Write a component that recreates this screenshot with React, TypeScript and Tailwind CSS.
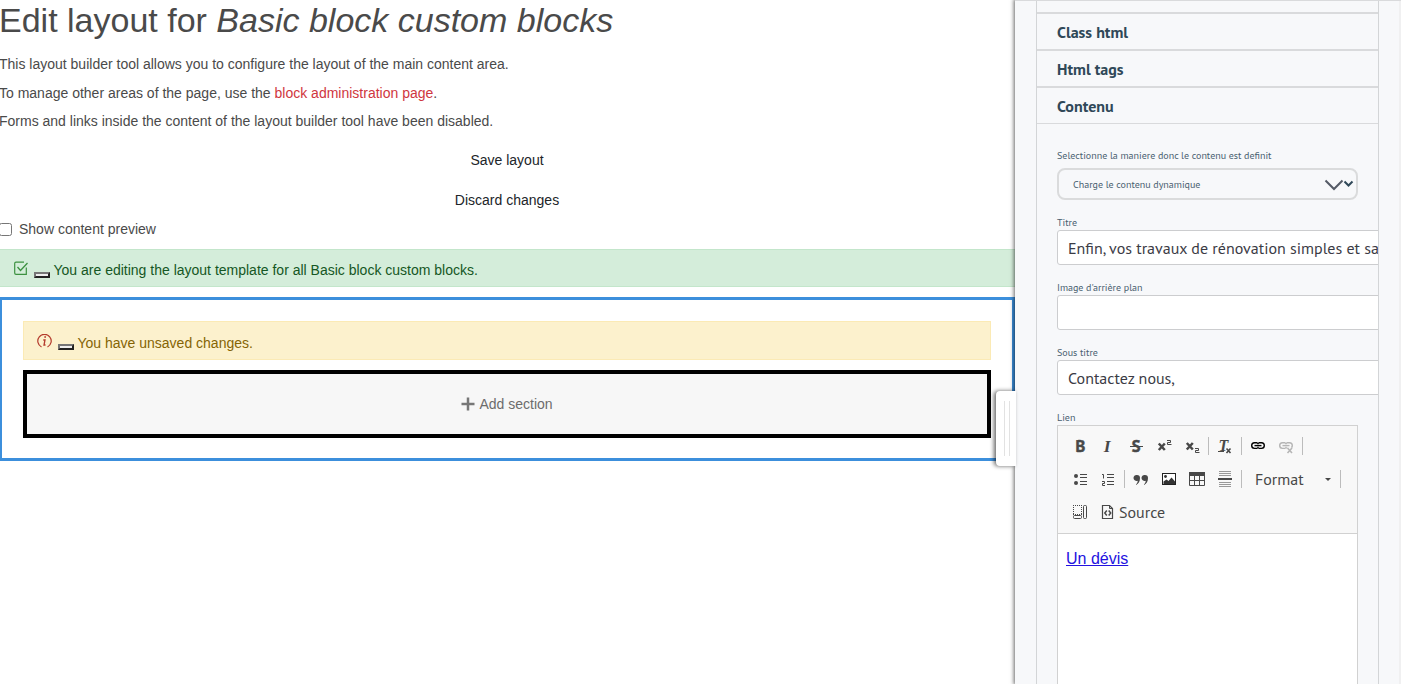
import type { ReactNode } from 'react';

const Glyph = ({ children }: { children: ReactNode }) => (
  <span className="flex h-[33px] w-7 shrink-0 items-start justify-center pt-2">
    <svg width="16" height="16" viewBox="0 0 16 16" fill="none" stroke="#484848" overflow="visible">
      {children}
    </svg>
  </span>
);

const Separator = () => (
  <span className="flex h-[33px] w-[5px] shrink-0 items-start pt-[7px] pl-[2px]">
    <span className="h-[18px] w-px bg-[#bcbcbc]" />
  </span>
);

const letter = { fill: '#484848', stroke: 'none' };

const TwoMark = ({ x, y }: { x: number; y: number }) => (
  <path d={`M${x} ${y + 0.5}h3.5v2h-3v2h4`} strokeWidth="1" />
);

const Bold = () => (
  <Glyph>
    <text x="3.500" y="14" fontSize="16.500" fontWeight="700" fontFamily="PT Sans" fill="#484848" stroke="#484848" strokeWidth="0.5">B</text>
  </Glyph>
);

const Italic = () => (
  <Glyph>
    <text x="3.800" y="13.800" fontSize="17.500" fontWeight="700" fontStyle="italic" fontFamily="Liberation Serif" {...letter}>I</text>
  </Glyph>
);

const Strike = () => (
  <Glyph>
    <text x="3.800" y="14" fontSize="16.500" fontWeight="700" fontFamily="PT Sans" fill="#484848" stroke="#484848" strokeWidth="0.4">S</text>
    <path d="M2 8.500h13" />
  </Glyph>
);

const Super = () => (
  <Glyph>
    <path d="M2.800 5.500l6 6.500M8.800 5.500l-6 6.500" strokeWidth="2.500" />
    <TwoMark x={11} y={2} />
  </Glyph>
);

const Sub = () => (
  <Glyph>
    <path d="M2.800 5l6 6.500M8.800 5l-6 6.500" strokeWidth="2.500" />
    <TwoMark x={11} y={10} />
  </Glyph>
);

const ClearFormat = () => (
  <Glyph>
    <text x="1.600" y="12.500" fontSize="16" fontWeight="700" fontStyle="italic" fontFamily="Liberation Serif" {...letter}>T</text>
    <path d="M1 13.500h6" />
    <path d="M9.500 10.500l4 4.500M13.500 10.500l-4 4.500" strokeWidth="1.600" />
  </Glyph>
);

const LinkShape = ({ tone }: { tone: string }) => (
  <g stroke={tone}>
    <path d="M7.500 4.800H4.500a2.800 2.800 0 0 0 0 5.600h3M8.500 4.800h3a2.800 2.800 0 0 1 0 5.600h-3" strokeWidth="1.400" />
    <path d="M6.800 4.800l1.500 1.200M9.200 4.800L7.700 6M6.800 10.400l1.500-1.200M9.200 10.400L7.700 9.200" strokeWidth="1" />
    <path d="M4.500 7.600h7" strokeWidth="1.400" />
  </g>
);

const Bullets = () => (
  <Glyph>
    <circle cx="4" cy="5" r="2" {...letter} />
    <circle cx="4" cy="12" r="2" {...letter} />
    <path d="M8 3.500h7M8 6.500h7M8 10.500h7M8 13.500h7" />
  </Glyph>
);

const Numbers = () => (
  <Glyph>
    <path d="M2 3.500h1.500v4M2 10.500h2.500v2h-2v2h2.500M7 3.500h7M7 6.500h7M7 10.500h7M7 13.500h7" />
  </Glyph>
);

const Quote = () => (
  <Glyph>
    <path
      transform="translate(0 1)"
      d="M4 3a3 3 0 0 1 3 3c0 3.500-1.500 6-4.500 7 1.500-1.600 2.300-2.800 2.200-4.300A3 3 0 1 1 4 3zM12 3a3 3 0 0 1 3 3c0 3.500-1.500 6-4.500 7 1.500-1.600 2.300-2.800 2.200-4.300A3 3 0 1 1 12 3z"
      {...letter}
    />
  </Glyph>
);

const Picture = () => (
  <Glyph>
    <rect x="1.500" y="2.500" width="13" height="11" fill="#fff" stroke="#222" />
    <path d="M2.500 13v-2.500l3-2 2 1.500 3-3.500 3.500 4V13z" fill="#333" stroke="none" />
    <circle cx="4.500" cy="5.500" r="1.400" fill="#333" stroke="none" />
  </Glyph>
);

const TableIcon = () => (
  <Glyph>
    <path d="M.5 2.500h15v12h-15zM0 9.500h16M5.500 4v11M10.500 4v11" />
    <path d="M0 3h16" strokeWidth="4" />
  </Glyph>
);

const Rule = () => (
  <Glyph>
    <path d="M2 .5h12M2 2.500h12M2 4.500h12M2 11.500h12M2 13.500h12M2 15.500h12" stroke="#999" />
    <path d="M1 8h14" strokeWidth="2" />
  </Glyph>
);

const Blocks = () => (
  <Glyph>
    <path d="M1 1.500h9M1 10.500h9" strokeDasharray="1 1" />
    <path d="M1.500 1v9M9.500 1v9" strokeDasharray="1 1" />
    <rect x="1.500" y="11.500" width="8" height="3" rx="1" />
    <rect x="11.500" y="1.500" width="3" height="13" rx="1" />
  </Glyph>
);

const PageCode = () => (
  <svg width="16" height="16" viewBox="0 0 16 16" fill="none" stroke="#484848">
    <path d="M2.500 1.500h7l3 3v10h-10z" strokeWidth="1.200" />
    <path d="M9.500 1.500v3h3" />
    <path d="M6.800 6.500l-2 2.500 2 2.500M8.700 6.500l2 2.500-2 2.500" strokeWidth="1.500" />
  </svg>
);

const Dash = () => (
  <span className="h-[6px] w-4 shrink-0 border-2 border-t-[#767676] border-l-[#767676] border-r-[#222] border-b-[#222] bg-[#efefef]" />
);

const Heading = ({ children }: { children: ReactNode }) => (
  <div className="flex h-[37px] items-center border-b-2 border-[#d9dadc] pl-5 pt-px text-base font-bold text-[#2f4858]">
    {children}
  </div>
);

const Field = ({ label, value }: { label: string; value: string }) => (
  <div className="h-[65px] pl-5">
    <div className="flex h-[15px] items-center pb-px text-[10px] text-[#496070]">{label}</div>
    <div className="flex h-[35px] w-[380px] items-center rounded-[3px] border border-[#cccdcf] bg-white pl-[10px] text-base whitespace-nowrap text-[#3b3b45]">
      {value}
    </div>
  </div>
);

const Main = () => (
  <main className="h-full w-[1015px] shrink-0 overflow-hidden bg-white text-sm text-[#4a4a4a]">
    <h1 className="-ml-px h-[50px] text-[34px] leading-[41px] whitespace-nowrap">
      Edit layout for <em>Basic block custom blocks</em>
    </h1>
    <div className="-ml-px h-[90px] leading-[28.500px]">
      <p>This layout builder tool allows you to configure the layout of the main content area.</p>
      <p>
        To manage other areas of the page, use the <a className="text-[#cf3640]">block administration page</a>.
      </p>
      <p>Forms and links inside the content of the layout builder tool have been disabled.</p>
    </div>
    <div className="-ml-px flex flex-col text-center leading-10 text-[#212529]">
      <button className="h-10">Save layout</button>
      <button className="h-10">Discard changes</button>
    </div>
    <label className="flex h-[29px] items-start gap-[7px] leading-[18px]">
      <span className="mt-[3px] -ml-px h-[13px] w-[13px] rounded-[2.500px] border border-[#767676] bg-white" />
      Show content preview
    </label>
    <div className="flex h-[38px] items-center border-y border-[#c3e6cb] bg-[#d4edda] pl-[14px] pt-[4px] text-[#155724]">
      <svg className="-mt-[4px] mr-[6px]" width="14" height="14" viewBox="0 0 14 14" fill="none" stroke="#3c9140">
        <path d="M10 1.200H2Q.7 1.200 .7 2.500V12Q.7 13.300 2 13.300H12.300V6.500" strokeWidth="1.200" />
        <path d="M3.500 6l3 3.500 7-7.500" strokeWidth="1.300" />
      </svg>
      <span className="mt-[10px] mr-1 flex"><Dash /></span>
      <span className="-ml-[0.500px] pb-px">You are editing the layout template for all Basic block custom blocks.</span>
    </div>
    <section className="mt-[10px] -ml-px h-[164px] w-[1016px] border-[3px] border-[#3c8fdc] px-[21px] pt-[21px]">
      <div className="flex h-[39px] items-center border border-[#fbeab5] bg-[#fcf1cd] pl-[13px] pt-[5px] text-[#856404]">
        <svg className="-mt-[4px] mr-[6px]" width="15" height="14" viewBox="0 0 15 14" fill="none" stroke="#b43a2c">
          <path d="M4.500 13A6.700 6.700 0 1 1 10.500 13" strokeWidth="1.200" />
          <path d="M6.300 6h1.700l-1 5h1.500" strokeWidth="1.300" />
          <path d="M7.300 3h1.700" strokeWidth="1.500" />
        </svg>
        <span className="mt-[8px] mr-1 flex"><Dash /></span>
        <span className="-ml-[0.500px] pb-px">You have unsaved changes.</span>
      </div>
      <div className="mt-[10px] flex h-[68px] items-center justify-center gap-1 border-4 border-black bg-[#f7f7f7] text-[#6c6c6c]">
        <svg width="14" height="14" viewBox="0 0 14 14" stroke="#777" strokeWidth="2.500">
          <path d="M7 .5v13M.5 7h13" />
        </svg>
        Add section
      </div>
    </section>
  </main>
);

const Toolbar = () => (
  <div className="h-[108px] border-b border-[#d1d1d1] bg-[#f8f8f8] pl-2 pt-[4px] text-[#484848]">
    <div className="flex h-[33px]">
      <Bold /><Italic /><Strike /><Super /><Sub />
      <Separator />
      <ClearFormat />
      <Separator />
      <Glyph><LinkShape tone="#000" /></Glyph>
      <Glyph>
        <LinkShape tone="#b5b5b5" />
        <path d="M9.500 10l4.500 5M14 10l-4.500 5" stroke="#f8f8f8" strokeWidth="4" />
        <path d="M9.500 10l4.500 5M14 10l-4.500 5" stroke="#b5b5b5" strokeWidth="1.600" />
      </Glyph>
      <Separator />
    </div>
    <div className="flex h-[33px] items-center">
      <Bullets /><Numbers />
      <Separator />
      <Quote /><Picture /><TableIcon /><Rule />
      <Separator />
      <span className="w-[81px] pb-[2px] pl-[11px] text-base">Format</span>
      <span className="h-0 w-0 border-x-[3px] border-t-[3px] border-x-transparent border-t-[#484848]" />
      <span className="w-[7px]" />
      <Separator />
    </div>
    <div className="flex h-[33px] items-center">
      <Blocks />
      <span className="-mt-px ml-[6px] mr-[3px]"><PageCode /></span>
      <span className="pb-[2px] text-base">Source</span>
    </div>
  </div>
);

const Sidebar = () => (
  <aside className="relative z-10 flex h-full w-[386px] shrink-0 justify-between border-t border-[#d9dadc] bg-[#f7f8fa] font-['PT_Sans','Noto_Sans',sans-serif] shadow-[0_0_4px_1px_rgba(0,0,0,0.6)]">
    <div className="ml-[21px] w-[343px] overflow-hidden border-x border-[#d3d5d7]">
      <div className="h-[13px] border-b-2 border-[#d9dadc]" />
      <Heading>Class html</Heading>
      <Heading>Html tags</Heading>
      <div className="flex h-[36px] items-center border-b border-[#d9dadc] pl-5 text-base font-bold text-[#2f4858]">
        Contenu
      </div>
      <div className="mt-[24px] flex h-[15px] items-center pb-px pl-5 text-[10px] text-[#496070]">
        Selectionne la maniere donc le contenu est definit
      </div>
      <div className="mt-[5px] mb-[15px] ml-5 flex h-8 w-[301px] items-center rounded-lg border-2 border-[#dadbdc] pl-[14px] pr-[2px] text-[10px] text-[#496070]">
        <span className="flex-1">Charge le contenu dynamique</span>
        <svg className="mt-[2px]" width="30" height="12" viewBox="0 0 30 12" fill="none">
          <path d="M1.500 1.500l8.500 8.500 8.500-8.500" stroke="#555b66" strokeWidth="2" />
          <path d="M20.500 2.500l4 4 4-4" stroke="#2f4858" strokeWidth="2" />
        </svg>
      </div>
      <Field label="Titre" value="Enfin, vos travaux de rénovation simples et sans" />
      <Field label="Image d'arrière plan" value="" />
      <Field label="Sous titre" value="Contactez nous," />
      <div className="flex h-[15px] items-center pb-px pl-5 text-[10px] text-[#496070]">Lien</div>
      <div className="ml-5 h-[300px] w-[301px] border border-[#d1d1d1] bg-white">
        <Toolbar />
        <a className="mt-[15px] ml-2 inline-block font-['Liberation_Sans',Arial,sans-serif] text-base leading-5 text-[#2312e0] underline">
          Un dévis
        </a>
      </div>
    </div>
    <div className="w-[2px] bg-[#f0f0f1]" />
    <div className="absolute top-[390px] -left-[19px] flex h-[75px] w-5 justify-center gap-1 rounded-l-[4px] bg-white pt-[10px] pl-[2px] shadow-[-2px_0_4px_0_rgba(0,0,0,0.6)]">
      <span className="h-[55px] w-px bg-[#e2e2e2]" />
      <span className="h-[55px] w-px bg-[#e2e2e2]" />
    </div>
  </aside>
);

export default function App() {
  return (
    <div className="flex h-[684px] w-[1401px] overflow-hidden bg-white font-['Liberation_Sans',Arial,sans-serif]">
      <Main />
      <Sidebar />
    </div>
  );
}
